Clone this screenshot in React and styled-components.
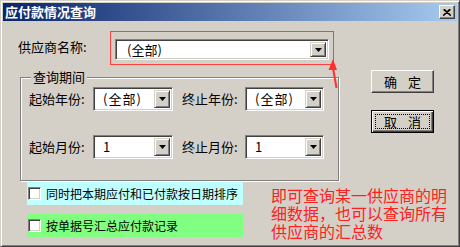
import React from "react";
import styled, { createGlobalStyle } from "styled-components";

const Global = createGlobalStyle`
  html, body { margin: 0; padding: 0; background: #d4d0c8; }
  body { font-family: "Noto Sans CJK SC", "Noto Sans", sans-serif; }
  * { box-sizing: border-box; }
`;

const FONT = `"Noto Sans CJK SC", "Noto Sans", sans-serif`;

const Window = styled.div`
  position: relative;
  width: 460px;
  height: 247px;
  background: #d4d0c8;
  border-top: 1px solid #d4d0c8;
  border-left: 1px solid #d4d0c8;
  border-right: 1px solid #404040;
  border-bottom: 1px solid #404040;
  box-shadow: inset 1px 1px 0 #ffffff, inset -1px -1px 0 #808080;
  padding: 2px;
  display: flex;
  flex-direction: column;
  font-family: ${FONT};
  overflow: hidden;
`;

const TitleBar = styled.div`
  height: 18px;
  flex: none;
  background: linear-gradient(to right, #0a246a, #a6caf0);
  display: flex;
  align-items: center;
  justify-content: space-between;
  padding: 0 2px 0 2px;
`;

const TitleText = styled.span`
  color: #ffffff;
  font-weight: bold;
  font-size: 13px;
  line-height: 18px;
`;

const CloseBtn = styled.div`
  width: 16px;
  height: 14px;
  background: #d4d0c8;
  border-top: 1px solid #ffffff;
  border-left: 1px solid #ffffff;
  border-right: 1px solid #404040;
  border-bottom: 1px solid #404040;
  box-shadow: inset -1px -1px 0 #808080;
  display: flex;
  align-items: center;
  justify-content: center;
`;

const Body = styled.div`
  position: relative;
  flex: 1;
  display: flex;
  flex-direction: column;
`;

const SupplierRow = styled.div`
  display: flex;
  align-items: center;
  margin-top: 18px;
  padding-left: 15px;
  height: 21px;
`;

const Label = styled.span`
  font-size: 13px;
  line-height: 16px;
  color: #000;
  white-space: nowrap;
  ${(p) => (p.$w ? `width: ${p.$w}px;` : "")}
  ${(p) => (p.$raise ? `margin-bottom: ${p.$raise * 2}px;` : "")}
  flex: none;
`;

const Combo = styled.div`
  width: ${(p) => p.$w}px;
  height: ${(p) => p.$h}px;
  background: #ffffff;
  border-top: 1px solid #808080;
  border-left: 1px solid #808080;
  border-right: 1px solid #ffffff;
  border-bottom: 1px solid #ffffff;
  box-shadow: inset 1px 1px 0 #404040, inset -1px -1px 0 #d4d0c8;
  display: flex;
  align-items: center;
  padding: 2px;
  flex: none;
`;

const ComboText = styled.span`
  flex: 1;
  font-size: 13px;
  line-height: 16px;
  padding-left: ${(p) => p.$pad}px;
  letter-spacing: ${(p) => p.$ls || 0}px;
  color: #000;
  white-space: nowrap;
`;

const DropBtn = styled.div`
  width: 16px;
  align-self: stretch;
  background: #d4d0c8;
  border-top: 1px solid #d4d0c8;
  border-left: 1px solid #d4d0c8;
  border-right: 1px solid #404040;
  border-bottom: 1px solid #404040;
  box-shadow: inset 1px 1px 0 #ffffff, inset -1px -1px 0 #808080;
  display: flex;
  align-items: center;
  justify-content: center;
`;

const Arrow = () => (
  <svg width="7" height="4" viewBox="0 0 7 4">
    <path d="M0 0H7L3.5 4Z" fill="#000" />
  </svg>
);

const MiddleRow = styled.div`
  display: flex;
  align-items: flex-start;
`;

const GroupBox = styled.div`
  position: relative;
  flex: none;
  margin-top: 17px;
  margin-left: 17px;
  width: 319px;
  height: 104px;
  border: 1px solid #808080;
  box-shadow: inset 1px 1px 0 #ffffff, 1px 1px 0 #ffffff;
  padding: 9px 0 0 8px;
`;

const GroupCaption = styled.span`
  position: absolute;
  top: -9px;
  left: 10px;
  padding: 0 2px;
  background: #d4d0c8;
  font-size: 13px;
  line-height: 16px;
  color: #000;
`;

const PeriodGrid = styled.div`
  display: grid;
  grid-template-columns: 64px 80px 72px 79px;
  grid-auto-rows: 24px;
  row-gap: 24px;
  align-items: center;
`;

const Cell = styled.div`
  display: flex;
  align-items: center;
  justify-content: ${(p) => (p.$end ? "flex-end" : "flex-start")};
`;

const ButtonCol = styled.div`
  display: flex;
  flex-direction: column;
  gap: 17px;
  margin-top: 10px;
  margin-left: 32px;
`;

const Button = styled.div`
  width: 63px;
  height: 23px;
  background: #d4d0c8;
  font-size: 13px;
  line-height: 16px;
  color: #000;
  display: flex;
  align-items: center;
  justify-content: center;
  gap: 11px;
  position: relative;
  ${(p) =>
    p.$default
      ? `border: 1px solid #000;
         box-shadow: inset 1px 1px 0 #ffffff, inset -1px -1px 0 #404040, inset -2px -2px 0 #808080;`
      : `border-top: 1px solid #ffffff; border-left: 1px solid #ffffff;
         border-right: 1px solid #404040; border-bottom: 1px solid #404040;
         box-shadow: inset -1px -1px 0 #808080;`}
`;

const FocusRect = styled.span`
  position: absolute;
  inset: 3px;
  border: 1px dotted #000;
  pointer-events: none;
`;

const BottomRow = styled.div`
  display: flex;
  align-items: flex-start;
  margin-top: 1px;
`;

const CheckCol = styled.div`
  display: flex;
  flex-direction: column;
  gap: 9px;
  margin-left: 24px;
  width: 216px;
  flex: none;
`;

const CheckRow = styled.div`
  height: 23px;
  background: ${(p) => p.$bg};
  display: flex;
  align-items: center;
  padding-left: 1px;
  gap: 5px;
  font-size: 12px;
  line-height: 14px;
  color: #000;
  white-space: nowrap;
  overflow: hidden;
`;

const CheckBox = styled.span`
  width: 13px;
  height: 13px;
  flex: none;
  background: #fff;
  border-top: 1px solid #808080;
  border-left: 1px solid #808080;
  border-right: 1px solid #ffffff;
  border-bottom: 1px solid #ffffff;
  box-shadow: inset 1px 1px 0 #404040, inset -1px -1px 0 #d4d0c8;
`;

const Note = styled.div`
  margin-left: 28px;
  margin-top: 4px;
  font-size: 16px;
  line-height: 18px;
  color: #ff2020;
  white-space: nowrap;
`;

const Highlight = styled.div`
  position: absolute;
  left: 107px;
  top: 10px;
  width: 224px;
  height: 34px;
  border: 1px solid #ff4040;
  pointer-events: none;
`;

const ArrowMark = styled.svg`
  position: absolute;
  left: 323px;
  top: 38px;
  pointer-events: none;
`;

const PeriodCombo = ({ w, text }) => (
  <Combo $w={w} $h={24}>
    <ComboText $pad={7} $ls={1}>{text}</ComboText>
    <DropBtn>
      <Arrow />
    </DropBtn>
  </Combo>
);

export default function App() {
  return (
    <>
      <Global />
      <Window>
        <TitleBar>
          <TitleText>应付款情况查询</TitleText>
          <CloseBtn>
            <svg width="8" height="7" viewBox="0 0 8 7">
              <path
                d="M0.5 0.5L7.5 6.5M7.5 0.5L0.5 6.5M1.5 0.5L8 6.5M6.5 0.5L0 6.5"
                stroke="#000"
                strokeWidth="1.1"
              />
            </svg>
          </CloseBtn>
        </TitleBar>
        <Body>
          <SupplierRow>
            <Label $w={97} $raise={3}>供应商名称:</Label>
            <Combo $w={214} $h={21}>
              <ComboText $pad={9}>(全部)</ComboText>
              <DropBtn>
                <Arrow />
              </DropBtn>
            </Combo>
          </SupplierRow>
          <MiddleRow>
            <GroupBox>
              <GroupCaption>查询期间</GroupCaption>
              <PeriodGrid>
                <Cell>
                  <Label>起始年份:</Label>
                </Cell>
                <Cell>
                  <PeriodCombo w={80} text="(全部)" />
                </Cell>
                <Cell $end>
                  <Label $w={63}>终止年份:</Label>
                </Cell>
                <Cell>
                  <PeriodCombo w={79} text="(全部)" />
                </Cell>
                <Cell>
                  <Label>起始月份:</Label>
                </Cell>
                <Cell>
                  <PeriodCombo w={80} text="1" />
                </Cell>
                <Cell $end>
                  <Label $w={63}>终止月份:</Label>
                </Cell>
                <Cell>
                  <PeriodCombo w={79} text="1" />
                </Cell>
              </PeriodGrid>
            </GroupBox>
            <ButtonCol>
              <Button>
                <span>确</span>
                <span>定</span>
              </Button>
              <Button $default>
                <span>取</span>
                <span>消</span>
                <FocusRect />
              </Button>
            </ButtonCol>
          </MiddleRow>
          <BottomRow>
            <CheckCol>
              <CheckRow $bg="#c0ffff">
                <CheckBox />
                同时把本期应付和已付款按日期排序
              </CheckRow>
              <CheckRow $bg="#80ff80">
                <CheckBox />
                按单据号汇总应付款记录
              </CheckRow>
            </CheckCol>
            <Note>
              即可查询某一供应商的明
              <br />
              细数据，也可以查询所有
              <br />
              供应商的汇总数
            </Note>
          </BottomRow>
          <Highlight />
          <ArrowMark width="14" height="30" viewBox="0 0 14 30">
            <path d="M7 0L2.5 11H11Z" fill="#ff3030" />
            <path d="M7 9L10.5 29" stroke="#ff3030" strokeWidth="2" />
          </ArrowMark>
        </Body>
      </Window>
    </>
  );
}
